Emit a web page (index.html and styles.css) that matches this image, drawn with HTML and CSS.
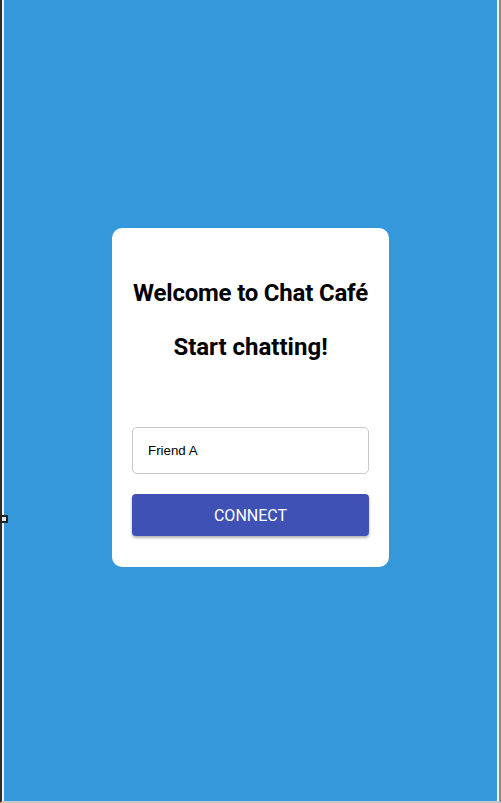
FILE: index.html
```html
<!DOCTYPE html>
<html lang="en">
<head>
<meta charset="utf-8">
<title>Chat Café</title>
<link rel="stylesheet" href="styles.css">
</head>
<body>
<div class="frame">
  <div class="edge-mark"></div>
  <main class="stage">
    <section class="card">
      <h2 class="title">Welcome to Chat Café</h2>
      <h2 class="subtitle">Start chatting!</h2>
      <form class="form">
        <input class="name-input" type="text" value="Friend A">
        <button class="connect" type="button">Connect</button>
      </form>
    </section>
  </main>
</div>
</body>
</html>
```

FILE: styles.css
```css
html, body {
  margin: 0;
  padding: 0;
  height: 100%;
}
body {
  background: #ffffff;
  font-family: Roboto, "Liberation Sans", Arial, sans-serif;
}
.frame {
  position: relative;
  box-sizing: border-box;
  height: 803px;
  display: flex;
  border-left: 2px solid #2c2c2c;
  border-right: 2px solid #8a8a8a;
  border-bottom: 2px solid #c8c8c8;
  padding-left: 2px;
  padding-right: 2px;
  background: #f4f4f4;
}
.edge-mark {
  position: absolute;
  left: -2px;
  top: 515px;
  width: 4px;
  height: 4px;
  border: 2px solid #222;
  border-radius: 1px;
  background: #e8e8e8;
}
.stage {
  flex: 1;
  background: #3598db;
  display: flex;
  align-items: center;
  justify-content: center;
  padding-bottom: 6px;
}
.card {
  box-sizing: border-box;
  width: 277px;
  background: #ffffff;
  border-radius: 10px;
  padding: 40px 20px 31px;
  text-align: center;
}
.title, .subtitle {
  margin: 0;
  font-size: 24px;
  font-weight: 700;
  color: #000;
  line-height: 28px;
  white-space: nowrap;
}
.title {
  margin-top: 11px;
  letter-spacing: -0.2px;
  margin-left: -10px;
  margin-right: -10px;
}
.subtitle {
  margin-top: 26px;
}
.form {
  margin-top: 66px;
  display: flex;
  flex-direction: column;
  gap: 20px;
}
.name-input {
  box-sizing: border-box;
  width: 100%;
  height: 47px;
  padding: 0 15px;
  border: 1px solid #c8c8c8;
  border-radius: 5px;
  font-family: "Liberation Sans", Arial, sans-serif;
  font-size: 13.333px;
  color: #000;
  outline: none;
}
.connect {
  height: 42px;
  border: none;
  border-radius: 4px;
  background: #3f51b5;
  color: #ffffff;
  font-family: Roboto, sans-serif;
  font-size: 16px;
  font-weight: 400;
  text-transform: uppercase;
  letter-spacing: 0;
  box-shadow: 0 2px 3px rgba(0,0,0,0.3);
}
```
